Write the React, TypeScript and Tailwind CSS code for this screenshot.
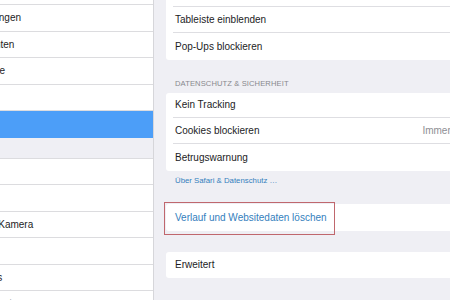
import React from 'react';

const FONT = { fontFamily: '"Liberation Sans", Arial, sans-serif' };

// sidebar rows, text starts left of the visible area (icons are clipped)
const TOP_GROUP = ['Notizen', 'Erinnerungen', 'Nachrichten', 'FaceTime', 'Karten'];
const MEDIA_GROUP = ['Musik', 'Videos', 'Fotos & Kamera', 'iBooks', 'Podcasts', 'Game Center'];

function SideRow({ label }: { label: string }) {
  return (
    <div className="h-[26.5px] flex items-center border-b border-[#dcdcdf] bg-white">
      <span className="ml-[-39px] whitespace-nowrap text-[10px] text-[#1c1c1e]">{label}</span>
    </div>
  );
}

function Row({ label, value, last, h = 'h-[26.5px]' }: { label: string; value?: string; last?: boolean; h?: string }) {
  return (
    <div className={`${h} pl-[7px] flex`}>
      <div
        className={`flex-1 flex items-center pl-[2px] pr-[22px] ${last ? '' : 'border-b border-[#dedee2]'}`}
      >
        <span className="whitespace-nowrap text-[10px] text-[#1c1c1e]">{label}</span>
        {value && (
          <span className="ml-auto whitespace-nowrap text-[10px] text-[#8e8e93]">{value}</span>
        )}
      </div>
    </div>
  );
}

export default function App() {
  return (
    <div className="w-[450px] h-[300px] overflow-hidden flex bg-[#efeff4]" style={FONT}>
      {/* sidebar */}
      <aside className="w-[154px] shrink-0 border-r border-[#d6d6da] bg-[#efeff4] overflow-hidden">
        <div className="mt-[-21.5px]">
          {TOP_GROUP.map((l) => (
            <SideRow key={l} label={l} />
          ))}
          <div className="h-[26.5px] bg-[#4c9ef8] flex items-center">
            <span className="ml-[-39px] text-[10px] text-white">Safari</span>
          </div>
          <div className="h-[20px]" />
          <div className="border-t border-[#dcdcdf]">
            {MEDIA_GROUP.map((l) => (
              <SideRow key={l} label={l} />
            ))}
          </div>
        </div>
      </aside>

      {/* safari settings */}
      <main className="flex-1 pl-[12px]">
        <div className="w-[349px]">
          <div className="mt-[-20px] bg-white rounded-[3px]">
            <Row label="Links öffnen" value="In neuem Tab" />
            <Row label="Tableiste einblenden" />
            <Row label="Pop-Ups blockieren" last />
          </div>

          <div className="pt-[19px] pb-[4px] pl-[9px] leading-[10px] text-[7.6px] tracking-[0.1px] text-[#88888d] uppercase">
            Datenschutz &amp; Sicherheit
          </div>

          <div className="bg-white rounded-[3px]">
            <Row h="h-[25px]" label="Kein Tracking" />
            <Row h="h-[26px]" label="Cookies blockieren" value="Immer zulassen" />
            <Row h="h-[27px]" label="Betrugswarnung" last />
          </div>

          <div className="pt-[5px] pb-[18px] pl-[9px] leading-[10px] text-[7.8px] text-[#3480bd]">
            Über Safari &amp; Datenschutz …
          </div>

          <div className="relative h-[27px] bg-white rounded-[3px] flex items-center pl-[9px]">
            <span className="text-[10px] text-[#3480bd] whitespace-nowrap">
              Verlauf und Websitedaten löschen
            </span>
            <div className="absolute left-[-2px] top-[-2px] w-[171px] h-[33px] border border-[#c0676d]" />
          </div>

          <div className="mt-[21px] h-[26px] bg-white rounded-[3px] flex items-center pl-[9px]">
            <span className="text-[10px] text-[#1c1c1e]">Erweitert</span>
          </div>
        </div>
      </main>
    </div>
  );
}
